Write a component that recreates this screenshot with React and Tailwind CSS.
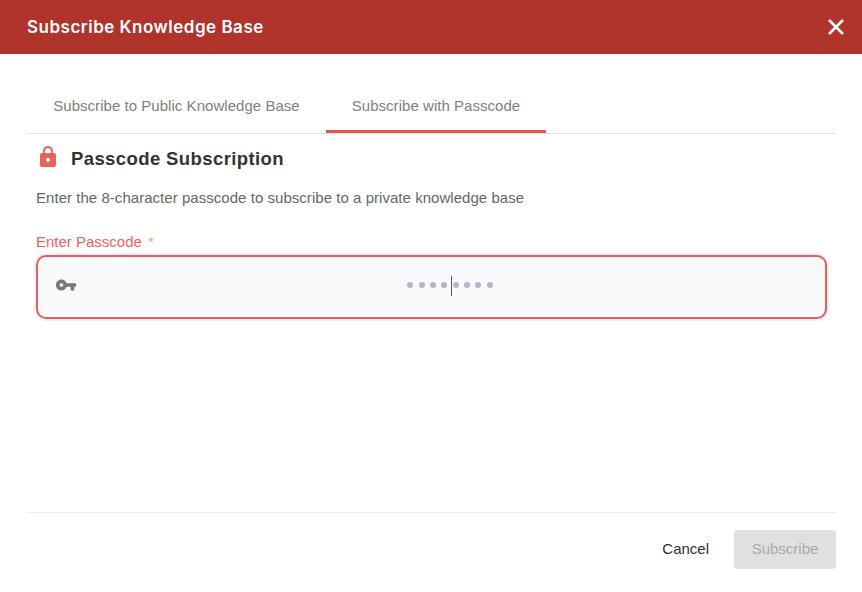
import React from 'react';

const dots = [0, 1, 2, 3, 4, 5, 6, 7];

const App = () => {
  return (
    <div className="w-[862px] h-[592px] bg-white flex flex-col overflow-hidden font-['Liberation_Sans',sans-serif]">
      {/* Header */}
      <div className="h-[54px] bg-[#b0332c] flex items-center justify-between pl-[27px] pr-[16px]">
        <h1 className="mt-[1px] text-white text-[17px] font-semibold tracking-[0.5px] font-['Inter',sans-serif]">Subscribe Knowledge Base</h1>
        <svg width="20" height="20" viewBox="0 0 20 20" fill="none" stroke="white" strokeWidth="2.6">
          <path d="M3 3L17 17M17 3L3 17" />
        </svg>
      </div>

      <div className="flex-1 flex flex-col pl-[27px] pr-[26px]">
        {/* Tabs */}
        <div className="flex h-[80px] pt-[26px] border-b border-[#e2e2e2]">
          <button className="w-[299px] h-[53px] text-[15px] tracking-[0.04px] text-[#808080] text-center">Subscribe to Public Knowledge Base</button>
          <button className="w-[220px] h-[53px] pt-[3px] text-[15px] tracking-[0.04px] text-[#808080] text-center border-b-[3px] border-[#ea5345]">Subscribe with Passcode</button>
        </div>

        {/* Form */}
        <div className="flex-1 pl-[9px]">
          <div className="flex items-start gap-[11px] mt-[11px]">
            <svg width="24" height="24" viewBox="0 0 24 24" fill="#e9635b">
              <path d="M18 8h-1V6c0-2.76-2.24-5-5-5S7 3.24 7 6v2H6c-1.1 0-2 .9-2 2v10c0 1.1.9 2 2 2h12c1.1 0 2-.9 2-2V10c0-1.1-.9-2-2-2zm-6 9c-1.1 0-2-.9-2-2s.9-2 2-2 2 .9 2 2-.9 2-2 2zm3.1-9H8.9V6c0-1.71 1.39-3.1 3.1-3.1 1.71 0 3.1 1.39 3.1 3.1v2z" />
            </svg>
            <h2 className="text-[18.5px] leading-[28px] font-bold text-[#333333] tracking-[0.4px]">Passcode Subscription</h2>
          </div>
          <p className="mt-[15px] text-[15px] tracking-[0.04px] leading-[20px] text-[#666666]">Enter the 8-character passcode to subscribe to a private knowledge base</p>
          <div className="mt-[24px] text-[15px] leading-[20px] text-[#e9635b]">
            Enter Passcode <span className="text-[#f0a08a] ml-[2px]">*</span>
          </div>
          <div className="relative mt-[3px] h-[64px] w-[791px] flex items-center rounded-[10px] border-2 border-[#e5605a] bg-[#f7f9fb] ring-2 ring-[#e8f1fb] pl-[17px] pr-[16px] pb-[4px]">
            <svg width="22" height="22" viewBox="0 0 24 24" fill="#77777f">
              <path d="M12.65 10C11.83 7.67 9.61 6 7 6c-3.31 0-6 2.69-6 6s2.69 6 6 6c2.61 0 4.83-1.67 5.65-4H17v4h4v-4h2v-4H12.65zM7 14c-1.1 0-2-.9-2-2s.9-2 2-2 2 .9 2 2-.9 2-2 2z" />
            </svg>
            <div className="flex-1 flex justify-center gap-[5.4px] pl-[14px]">
              {dots.map((d) => (
                <span key={d} className="w-[6px] h-[6px] rounded-full bg-[#b5b5c8]"></span>
              ))}
            </div>
            <span className="absolute left-[413px] top-[19px] w-px h-[20px] bg-[#555555]"></span>
          </div>
        </div>

        {/* Footer */}
        <div className="h-[80px] border-t border-[#ececec] flex items-start justify-end gap-[25px] pt-[17px]">
          <button className="h-[39px] text-[15px] text-[#3a2a2a]">Cancel</button>
          <button className="w-[102px] h-[39px] rounded-[4px] bg-[#e0e0e0] text-[15px] text-[#a9a9b0]">Subscribe</button>
        </div>
      </div>
    </div>
  );
};

export default App;
